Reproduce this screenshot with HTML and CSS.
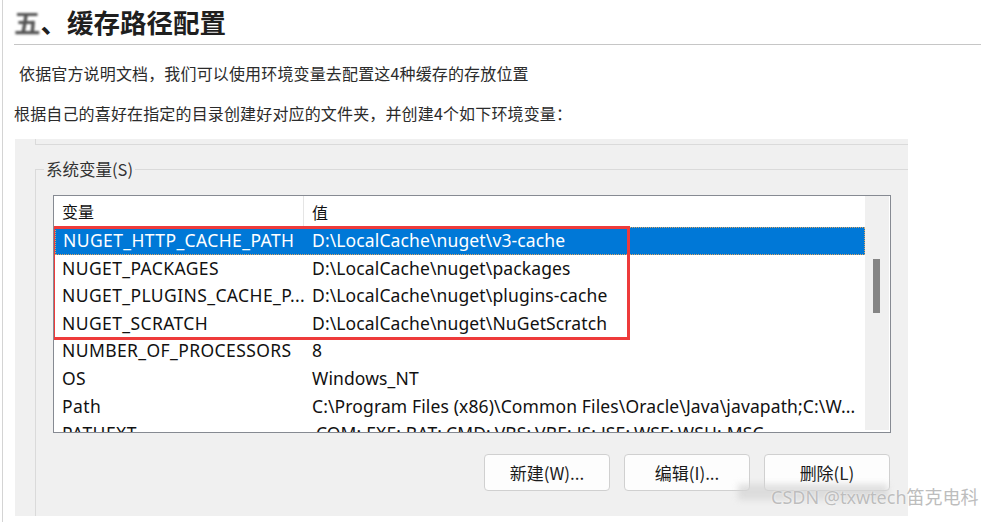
FILE: index.html
```html
<!DOCTYPE html>
<html lang="zh">
<head>
<meta charset="utf-8">
<title>缓存路径配置</title>
<link rel="stylesheet" href="styles.css">
</head>
<body>
<div class="page">
  <h1 class="heading"><span class="mosaic">五</span>、缓存路径配置</h1>
  <p class="para para-indent">依据官方说明文档，我们可以使用环境变量去配置这4种缓存的存放位置</p>
  <p class="para">根据自己的喜好在指定的目录创建好对应的文件夹，并创建4个如下环境变量：</p>
  <div class="shot">
    <div class="prev-group"></div>
    <div class="group">
      <span class="group-label">系统变量(S)</span>
      <div class="list">
        <div class="list-main">
          <div class="list-head">
            <div class="col col-name">变量</div>
            <div class="col col-val">值</div>
          </div>
          <div class="rows">
            <div class="row selected"><div class="col col-name">NUGET_HTTP_CACHE_PATH</div><div class="col col-val">D:\LocalCache\nuget\v3-cache</div></div>
            <div class="row"><div class="col col-name">NUGET_PACKAGES</div><div class="col col-val">D:\LocalCache\nuget\packages</div></div>
            <div class="row"><div class="col col-name">NUGET_PLUGINS_CACHE_P...</div><div class="col col-val">D:\LocalCache\nuget\plugins-cache</div></div>
            <div class="row"><div class="col col-name">NUGET_SCRATCH</div><div class="col col-val">D:\LocalCache\nuget\NuGetScratch</div></div>
            <div class="row"><div class="col col-name">NUMBER_OF_PROCESSORS</div><div class="col col-val">8</div></div>
            <div class="row"><div class="col col-name">OS</div><div class="col col-val">Windows_NT</div></div>
            <div class="row"><div class="col col-name">Path</div><div class="col col-val">C:\Program Files (x86)\Common Files\Oracle\Java\javapath;C:\W...</div></div>
            <div class="row"><div class="col col-name">PATHEXT</div><div class="col col-val">.COM;.EXE;.BAT;.CMD;.VBS;.VBE;.JS;.JSE;.WSF;.WSH;.MSC</div></div>
          </div>
          <div class="highlight"></div>
        </div>
        <div class="scrollbar"><div class="thumb"></div></div>
      </div>
      <div class="buttons">
        <button class="btn">新建(W)...</button>
        <button class="btn">编辑(I)...</button>
        <button class="btn">删除(L)</button>
      </div>
    </div>
  </div>
  <div class="watermark"><span class="wm-blur"></span><span class="wm-text">CSDN @txwtech笛克电科</span></div>
</div>
</body>
</html>
```

FILE: styles.css
```css
* { box-sizing: border-box; }
html, body { margin: 0; padding: 0; background: #fff; }
body {
  width: 981px;
  height: 522px;
  overflow: hidden;
  font-family: "Noto Sans CJK SC", "Noto Sans", sans-serif;
  color: #222;
}
.page {
  position: relative;
  margin-left: 2px;
  height: 522px;
  border-left: 1px solid #d4d4d4;
  padding-left: 11px;
}
.heading {
  margin: 0;
  padding: 6px 0 6px 0;
  font-size: 26.5px;
  line-height: 32px;
  font-weight: 700;
  color: #1f1f1f;
  border-bottom: 1px solid #c6c6c6;
}
.mosaic { filter: blur(1.2px); color: #555; }
.para {
  margin: 16px 0 0 0;
  font-size: 16px;
  letter-spacing: 0.15px;
  line-height: 24px;
  color: #2b2b2b;
}
.para-indent { padding-left: 5px; }
.shot {
  margin: 14px 0 0 1px;
  width: 893px;
  height: 377px;
  background: #f0f0f0;
  padding-left: 20px;
  font-family: "Noto Sans", "Noto Sans CJK SC", sans-serif;
  color: #111;
}
.prev-group {
  height: 6px;
  border-left: 1px solid #dadada;
  border-bottom: 1px solid #dadada;
}
.group {
  position: relative;
  margin-top: 24px;
  height: 347px;
  border-left: 1px solid #dadada;
  border-top: 1px solid #dadada;
  padding: 25px 0 0 17px;
}
.group-label {
  position: absolute;
  top: -12px;
  left: 8px;
  padding: 0 2px;
  background: #f0f0f0;
  font-size: 16.5px;
  line-height: 22px;
  color: #333;
  font-family: "Noto Sans CJK SC", "Noto Sans", sans-serif;
}
.list {
  display: flex;
  width: 838px;
  height: 238px;
  border: 1px solid #868a92;
  background: #fff;
}
.list-main {
  position: relative;
  flex: 1;
  overflow: hidden;
}
.list-head {
  display: flex;
  height: 31px;
  align-items: center;
  font-family: "Noto Sans CJK SC", "Noto Sans", sans-serif;
  font-size: 16px;
}
.list-head .col-name { border-right: 1px solid #e5e5e5; height: 31px; line-height: 31px; }
.col { white-space: nowrap; padding-left: 8px; }
.col-name { width: 250px; flex: none; }
.col-val { flex: 1; }
.rows { padding-left: 1px; }
.row {
  display: flex;
  height: 27.6px;
  line-height: 27.6px;
  font-size: 17.5px;
  margin-left: -1px;
}
.row .col-name { width: 250px; letter-spacing: 0.4px; }
.row .col-val { letter-spacing: 0.12px; }
.row.selected {
  background: #0078d7;
  color: #fff;
  outline: 1px dotted #d9a566;
  outline-offset: -1px;
  margin-left: 0;
}
.row.selected .col-name { width: 249px; }
.highlight {
  position: absolute;
  left: -2px;
  top: 30px;
  width: 578px;
  height: 114px;
  border: 3px solid #ee3b3b;
}
.scrollbar {
  position: relative;
  width: 24px;
  margin-right: 1px;
  background: #f0f0f0;
  margin-bottom: 2px;
}
.thumb {
  position: absolute;
  left: 8px;
  top: 63px;
  width: 7px;
  height: 54px;
  background: #858585;
}
.buttons {
  display: flex;
  justify-content: flex-end;
  gap: 14px;
  width: 837px;
  margin-top: 21px;
}
.btn {
  width: 126px;
  height: 37px;
  border: 1px solid #d0d0d0;
  border-radius: 4px;
  background: #fdfdfd;
  font-family: "Noto Sans CJK SC", "Noto Sans", sans-serif;
  font-size: 17px;
  color: #1a1a1a;
  padding: 0;
}
.watermark {
  position: absolute;
  left: 735px;
  top: 484px;
  width: 246px;
  height: 30px;
}
.wm-blur {
  position: absolute;
  left: 0;
  top: 0;
  width: 150px;
  height: 16px;
  background: #d4d4d4;
  filter: blur(3px);
  opacity: 0.7;
}
.wm-text {
  position: absolute;
  left: 33px;
  top: 1px;
  font-family: "Noto Sans", "Noto Sans CJK SC", sans-serif;
  font-size: 18px;
  line-height: 24px;
  color: #bdbdbd;
  white-space: nowrap;
  text-shadow: 0 0 2px #fff;
}
```
